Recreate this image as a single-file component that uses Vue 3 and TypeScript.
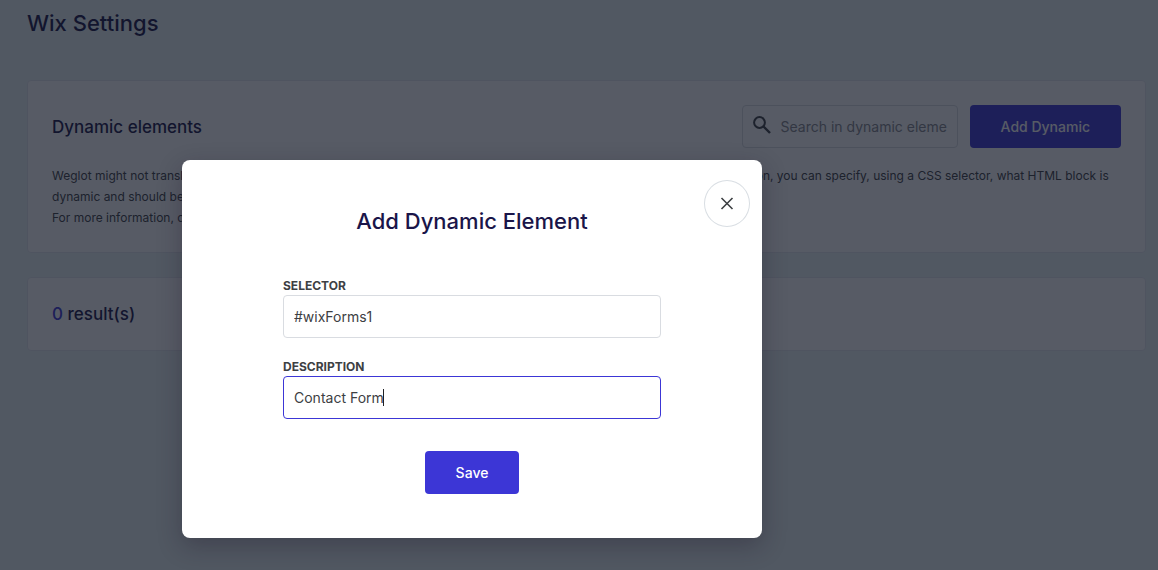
<script setup lang="ts">
import { nextTick, onMounted, ref, watch } from 'vue'

const search = ref<string>('')
const selector = ref<string>('#wixForms1')
const description = ref<string>('Contact Form')
const results = ref<number>(0)
const open = ref<boolean>(true)
const field = ref<HTMLInputElement | null>(null)
const caretLeft = ref<number>(0)

function placeCaret(): void {
  const input = field.value
  const context = document.createElement('canvas').getContext('2d')
  if (!input || !context) return
  const style = getComputedStyle(input)
  context.font = `${style.fontWeight} ${style.fontSize} ${style.fontFamily}`
  const start = parseFloat(style.paddingLeft) + parseFloat(style.borderLeftWidth)
  caretLeft.value = Math.floor(start + context.measureText(description.value).width)
}

watch(description, placeCaret)
onMounted(async () => {
  await nextTick()
  field.value?.focus()
  placeCaret()
})
</script>

<template>
  <div class="page">
    <main class="content">
      <h1 class="page-title">Wix Settings</h1>

      <section class="card">
        <div class="card-head">
          <h2 class="card-title">Dynamic elements</h2>
          <div class="search">
            <svg class="search-icon" viewBox="0 0 18 18" aria-hidden="true">
              <circle cx="6.5" cy="6.5" r="5.4" fill="none" stroke="currentColor" stroke-width="2" />
              <path d="M10.5 10.5 17 17" fill="none" stroke="currentColor" stroke-width="2.4" />
            </svg>
            <input v-model="search" class="search-input" type="text" aria-label="Search in dynamic elements" placeholder="Search in dynamic elements" />
          </div>
          <button class="button" type="button" @click="open = true">Add Dynamic</button>
        </div>
        <p class="copy">
          Weglot might not translate some of dynamic elements that are loaded on your website automatically by default. In this situation, you can specify, using a CSS selector, what HTML block is dynamic and should be translated.<br />
          For more information, check our documentation.
        </p>
      </section>

      <section class="card">
        <h2 class="card-title"><span class="count">{{ results }}</span> result(s)</h2>
      </section>
    </main>

    <div v-if="open" class="overlay">
      <form class="modal" role="dialog" aria-labelledby="modal-title" @submit.prevent="open = false">
        <button class="close" type="button" aria-label="Close" @click="open = false">
          <svg viewBox="0 0 14 14" width="14" height="14" aria-hidden="true">
            <path d="M1.5 1 12.5 12M12.5 1 1.5 12" fill="none" stroke="currentColor" stroke-width="1.6" />
          </svg>
        </button>
        <h2 id="modal-title" class="modal-title">Add Dynamic Element</h2>
        <div class="fields">
          <div class="field">
            <label class="label" for="selector">SELECTOR</label>
            <input id="selector" v-model="selector" class="input" type="text" />
          </div>
          <div class="field">
            <label class="label" for="description">DESCRIPTION</label>
            <div class="caret-box">
              <input id="description" ref="field" v-model="description" class="input active" type="text" />
              <span class="caret" :style="{ left: caretLeft + 'px' }"></span>
            </div>
          </div>
        </div>
        <button class="button" type="submit">Save</button>
      </form>
    </div>
  </div>
</template>

<style>
body {
  margin: 0;
}
</style>

<style scoped>
.page {
  position: relative;
  min-height: 100vh;
  overflow: hidden;
  background: #ebf5f5;
  color: #3d4043;
  font-family: Inter, "Liberation Sans", sans-serif;
  font-size: 14px;
}
.page * {
  box-sizing: border-box;
}
.content {
  display: flex;
  flex-direction: column;
  gap: 24px;
  padding: 8px 12px 24px 27px;
}
.page-title,
.modal-title {
  margin: 0;
  color: #1a1549;
  font-size: 22px;
  font-weight: 500;
  line-height: 30px;
}
.page-title {
  margin-bottom: 18px;
}
.card {
  padding: 24px;
  border: 1px solid #e4e8ef;
  border-radius: 4px;
  background: #fff;
}
.card-head {
  display: flex;
  align-items: center;
  gap: 12px;
}
.card-title {
  flex: 1;
  margin: 0;
  color: #1a1549;
  font-size: 17px;
  font-weight: 500;
  line-height: 24px;
}
.count {
  color: #3c36d6;
}
.search {
  position: relative;
  width: 216px;
}
.search-icon {
  position: absolute;
  top: 11px;
  left: 11px;
  width: 18px;
  height: 18px;
}
.search-input,
.input {
  display: block;
  width: 100%;
  height: 43px;
  border: 1px solid #d9dce1;
  border-radius: 4px;
  outline: none;
  background: transparent;
  color: #3d4043;
  font: inherit;
}
.search-input {
  padding: 0 10px 0 38px;
}
.search-input::placeholder {
  color: #85878c;
  opacity: 1;
}
.button {
  height: 43px;
  padding: 0 31px;
  border: 0;
  border-radius: 4px;
  background: #3c36d6;
  color: #fff;
  font: inherit;
  font-weight: 500;
}
.copy {
  margin: 17px 0 0;
  font-size: 12px;
  line-height: 21px;
}
.overlay {
  position: absolute;
  inset: 0;
  display: flex;
  align-items: flex-start;
  justify-content: center;
  padding: 160px 214px 32px 0;
  background: rgba(16, 21, 36, 0.7);
}
.modal {
  position: relative;
  display: flex;
  flex-direction: column;
  align-items: center;
  width: 580px;
  padding: 46px 24px 44px;
  border-radius: 8px;
  background: #fff;
  box-shadow: 0 8px 24px rgba(28, 18, 35, 0.3);
}
.close {
  position: absolute;
  top: 20px;
  right: 12px;
  display: grid;
  place-items: center;
  width: 46px;
  height: 47px;
  padding: 0;
  border: 1px solid #d9dee3;
  border-radius: 50%;
  background: #fff;
  color: #3d4043;
}
.fields {
  display: flex;
  flex-direction: column;
  gap: 20px;
  width: 378px;
  max-width: 100%;
  margin: 41px 0 32px;
}
.label {
  display: block;
  font-size: 12px;
  font-weight: 700;
  line-height: 18px;
}
.input {
  padding: 0 10px;
}
.active {
  border-color: #3c36d6;
  caret-color: transparent;
}
.caret-box {
  position: relative;
}
.caret {
  position: absolute;
  top: 13px;
  width: 1px;
  height: 17px;
  background: #202124;
}
</style>
